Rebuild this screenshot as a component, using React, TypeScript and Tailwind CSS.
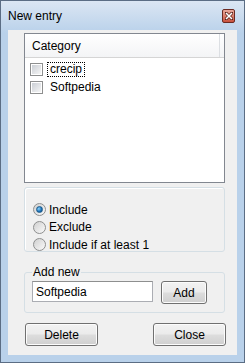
import React from 'react';

const font = { fontFamily: '"Liberation Sans", Arial, sans-serif' };

function Checkbox() {
  return (
    <div className="w-[13px] h-[13px] border border-[#8e8f8f] bg-white p-[1px] shrink-0">
      <div className="w-full h-full bg-gradient-to-br from-[#cbcfd5] to-[#f6f6f6]" />
    </div>
  );
}

function Radio({ checked }: { checked?: boolean }) {
  return (
    <div className="w-[13px] h-[13px] rounded-full border border-[#8e8f8f] bg-gradient-to-br from-[#d0d0d0] to-[#fafafa] flex items-center justify-center shrink-0">
      {checked && (
        <div className="w-[7px] h-[7px] rounded-full bg-[radial-gradient(circle_at_35%_35%,#8ad4ff,#1a6fb5_60%,#0d4a80)] border border-[#1c5a8a]" />
      )}
    </div>
  );
}

function Button({ label, className }: { label: string; className?: string }) {
  return (
    <button
      className={`border border-[#707070] rounded-[3px] bg-[linear-gradient(to_bottom,#f2f2f2_0%,#ebebeb_48%,#dddddd_52%,#cfcfcf_100%)] text-[11px] text-black shadow-[inset_0_0_0_1px_#fcfcfc] ${className ?? ''}`}
    >
      {label}
    </button>
  );
}

export default function App() {
  const radios = ['Include', 'Exclude', 'Include if at least 1'];
  return (
    <div
      className="w-[245px] h-[363px] border border-[#5b6d84] bg-[linear-gradient(to_bottom,#dbe6f3_0px,#b9d1ea_32px,#b9d1ea_100%)] flex flex-col text-black"
      style={font}
    >
      {/* title bar */}
      <div className="h-[29px] flex items-center justify-between pl-[7px] pr-[9px] pt-[1px]">
        <span className="text-[12px] leading-none">New entry</span>
        <div className="w-[13px] h-[14px] rounded-[2px] border border-[#6b2a22] bg-gradient-to-b from-[#e9a99c] to-[#c9503c] flex items-center justify-center">
          <svg width="8" height="8" viewBox="0 0 8 8">
            <path d="M1 1 L7 7 M7 1 L1 7" stroke="#5a2018" strokeWidth="3" strokeLinecap="square" />
            <path d="M1 1 L7 7 M7 1 L1 7" stroke="#fff" strokeWidth="1.6" />
          </svg>
        </div>
      </div>

      {/* client */}
      <div className="flex-1 mx-[7px] mb-[7px] bg-[#f0f0f0] flex flex-col pt-[3px] pl-[16px] pr-[12px] text-[11px]">
        {/* list */}
        <div className="h-[150px] border border-[#828790] bg-white flex flex-col">
          <div className="h-[24px] flex border-b border-[#d5d5d5] bg-gradient-to-b from-white to-[#f3f4f6]">
            <div className="flex-1 flex items-center pl-[7px] border-r border-[#dcdfe3] text-[12px]">Category</div>
            <div className="w-[4px]" />
          </div>
          <div className="flex flex-col pt-[2px] pl-[5px]">
            <div className="h-[18px] flex items-center">
              <Checkbox />
              <span className="ml-[4px] px-[2px] h-[15px] flex items-center border border-dotted border-black text-[12px]">crecip</span>
            </div>
            <div className="h-[18px] flex items-center">
              <Checkbox />
              <span className="ml-[7px] text-[12px]">Softpedia</span>
            </div>
          </div>
        </div>

        {/* radio group */}
        <div className="mt-[4px] h-[65px] border border-[#d5dfe5] rounded-[3px] shadow-[inset_1px_1px_0_#fff] flex flex-col pt-[13px] pl-[8px]">
          {radios.map((r, i) => (
            <div key={r} className="h-[17.5px] flex items-center">
              <Radio checked={i === 0} />
              <span className="ml-[3px] text-[12px]">{r}</span>
            </div>
          ))}
        </div>

        {/* add new */}
        <fieldset className="mt-[14px] h-[47px] border border-[#d5dfe5] rounded-[3px] px-[7px] flex">
          <legend className="px-[1px] text-[12px] leading-[13px]">Add new</legend>
          <div className="flex items-start pt-[2px] w-full">
            <div className="w-[121px] h-[21px] border border-[#abadb3] border-t-[#8e8f8f] bg-white flex items-center pl-[3px] text-[12px]">
              Softpedia
            </div>
            <Button label="Add" className="ml-[8px] w-[46px] h-[23px] text-[12px]" />
          </div>
        </fieldset>

        {/* bottom buttons */}
        <div className="mt-[10px] flex justify-between pl-[1px] -mr-[1px]">
          <Button label="Delete" className="w-[73px] h-[23px] text-[12px]" />
          <Button label="Close" className="w-[73px] h-[23px] text-[12px]" />
        </div>
      </div>
    </div>
  );
}
